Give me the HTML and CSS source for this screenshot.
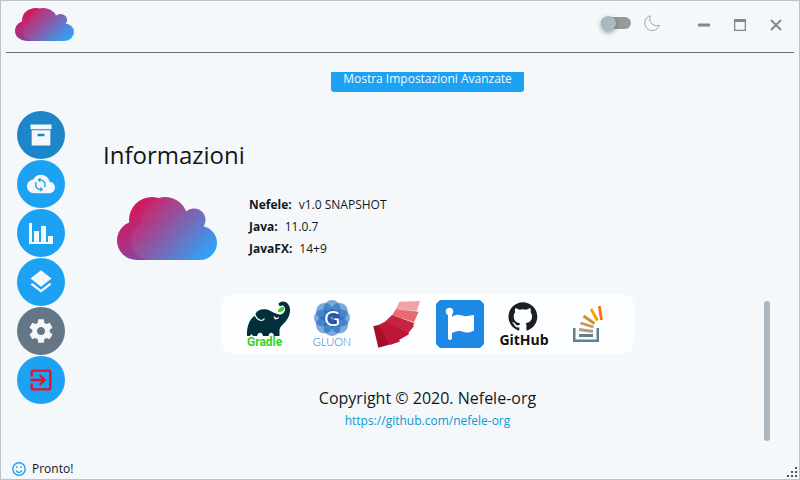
FILE: index.html
```html
<!DOCTYPE html>
<html lang="it">
<head>
<meta charset="utf-8">
<meta name="viewport" content="width=device-width, initial-scale=1">
<title>Nefele</title>
<link rel="stylesheet" href="styles.css">
</head>
<body>
<svg class="defs" aria-hidden="true">
  <defs>
    <linearGradient id="cloud-fill" gradientUnits="userSpaceOnUse" x1="22" y1="6" x2="84" y2="66">
      <stop offset="0" stop-color="#d81b60"/><stop offset="1" stop-color="#2ea3f8"/>
    </linearGradient>
    <linearGradient id="cloud-back" gradientUnits="userSpaceOnUse" x1="12" y1="20" x2="50" y2="62">
      <stop offset="0" stop-color="#cf1b63"/><stop offset="1" stop-color="#5f5fc0"/>
    </linearGradient>
    <symbol id="cloud" viewBox="0 0 100 63" preserveAspectRatio="none">
      <g fill="url(#cloud-back)">
        <circle cx="19.500" cy="43.500" r="19.500"/><circle cx="35" cy="23" r="23"/><path d="M19.500 30H60V63H19.500Z"/>
      </g>
      <g fill="url(#cloud-fill)">
        <circle cx="33.500" cy="43.500" r="19.500"/><circle cx="48" cy="23" r="23"/><circle cx="77" cy="23" r="11.500"/><circle cx="83" cy="46" r="17"/><path d="M33.500 26L66 22L83 30V63H33.500Z"/>
      </g>
    </symbol>
  </defs>
</svg>
<div class="window">
  <header class="titlebar">
    <svg class="brand" role="img" aria-label="Nefele"><use href="#cloud"/></svg>
    <label class="theme">
      <input class="switch" type="checkbox" aria-label="Tema scuro">
      <svg class="moon" viewBox="0 0 16 16" aria-hidden="true"><path d="M6.300.8A7.500 7.500 0 1 0 15.300 10.500A7.200 7.200 0 0 1 6.300.8Z"/></svg>
    </label>
    <div class="controls">
      <button aria-label="Riduci"><svg viewBox="0 0 12 12"><path d="M0 4.500h12v3H0z"/></svg></button>
      <button aria-label="Ingrandisci"><svg viewBox="0 0 12 12"><path fill-rule="evenodd" d="M0 0h12v12H0zM1.300 3v7.700h9.400V3z"/></svg></button>
      <button aria-label="Chiudi"><svg viewBox="0 0 12 12"><path class="cross" d="M1 1l10 10M11 1L1 11"/></svg></button>
    </div>
  </header>
  <div class="body">
    <nav class="sidebar" aria-label="Menu">
      <button class="nav selected" aria-label="Archivio"><svg viewBox="0 0 24 24"><path d="M3 3h18v4H3zM4 8h16v13H4zM9.500 11a.5.5 0 0 0-.5.5V13h6v-1.500a.5.5 0 0 0-.5-.5z" fill-rule="evenodd"/></svg></button>
      <button class="nav" aria-label="Sincronizza"><svg viewBox="0 0 24 24"><path d="M19.350 10.040C18.670 6.590 15.640 4 12 4 9.110 4 6.600 5.640 5.350 8.040 2.340 8.360 0 10.910 0 14c0 3.310 2.690 6 6 6h13c2.760 0 5-2.240 5-5 0-2.640-2.050-4.780-4.650-4.960z"/><path class="cut" transform="translate(4.500 5.600) scale(.58)" d="M12 4V1L8 5l4 4V6c3.310 0 6 2.690 6 6 0 1.010-.25 1.970-.7 2.800l1.460 1.460C19.540 15.030 20 13.570 20 12c0-4.420-3.580-8-8-8zm0 14c-3.310 0-6-2.690-6-6 0-1.010.25-1.970.7-2.800L5.240 7.740C4.460 8.970 4 10.430 4 12c0 4.420 3.580 8 8 8v3l4-4-4-4v3z"/></svg></button>
      <button class="nav" aria-label="Statistiche"><svg viewBox="0 0 28 28"><path d="M2 4h3v19h21v2H2zM7 12h5v12H7zM14 7h5v17h-5zM21 17h5v7h-5z"/></svg></button>
      <button class="nav" aria-label="Livelli"><svg viewBox="0 0 24 24"><path d="M11.990 18.540l-7.370-5.730L3 14.070l9 7 9-7-1.630-1.270-7.380 5.740zM12 16l7.360-5.730L21 9l-9-7-9 7 1.630 1.270L12 16z"/></svg></button>
      <button class="nav settings" aria-label="Impostazioni" aria-current="page"><svg viewBox="0 0 24 24"><path d="M19.430 12.980c.04-.32.07-.64.07-.98s-.03-.66-.07-.98l2.110-1.650c.19-.15.24-.42.12-.64l-2-3.460c-.12-.22-.39-.3-.61-.22l-2.490 1c-.52-.4-1.080-.73-1.690-.98l-.38-2.650C14.460 2.180 14.250 2 14 2h-4c-.25 0-.46.18-.49.42l-.38 2.650c-.61.25-1.170.59-1.690.98l-2.490-1c-.23-.09-.49 0-.61.22l-2 3.460c-.13.22-.07.49.12.64l2.110 1.650c-.04.32-.07.65-.07.98s.03.66.07.98l-2.110 1.650c-.19.15-.24.42-.12.64l2 3.460c.12.22.39.3.61.22l2.490-1c.52.4 1.080.73 1.690.98l.38 2.650c.03.24.24.42.49.42h4c.25 0 .46-.18.49-.42l.38-2.650c.61-.25 1.170-.59 1.690-.98l2.490 1c.23.09.49 0 .61-.22l2-3.460c.12-.22.07-.49-.12-.64l-2.110-1.650zM12 15.500c-1.930 0-3.500-1.570-3.500-3.500s1.570-3.500 3.500-3.500 3.500 1.570 3.500 3.500-1.570 3.500-3.500 3.500z"/></svg></button>
      <button class="nav exit" aria-label="Esci"><svg viewBox="0 0 24 24"><path d="M10.090 15.590L11.500 17l5-5-5-5-1.410 1.410L12.670 11H3v2h9.670l-2.580 2.590zM19 3H5c-1.110 0-2 .9-2 2v4h2V5h14v14H5v-4H3v4c0 1.100.89 2 2 2h14c1.100 0 2-.9 2-2V5c0-1.100-.9-2-2-2z"/></svg></button>
    </nav>
    <main class="content">
      <button class="advanced">Mostra Impostazioni Avanzate</button>
      <h1>Informazioni</h1>
      <section class="about">
        <svg class="cloud" role="img" aria-label="Nefele"><use href="#cloud"/></svg>
        <dl>
          <div><dt>Nefele:</dt><dd>v1.0 SNAPSHOT</dd></div>
          <div><dt>Java:</dt><dd>11.0.7</dd></div>
          <div><dt>JavaFX:</dt><dd>14+9</dd></div>
        </dl>
      </section>
      <div class="credits">
        <a href="#gradle" aria-label="Gradle"><svg viewBox="0 0 48 48">
          <path fill="#02303a" d="M3 36C2.500 28 5 19 11 15.500C12 10 18 8.500 23 9.500C27 10.500 29 13 32 13.500C36 16 41 14 41 9C41 5.500 38 4.500 36 6.500L34.300 4C36 1 41 .5 44 4C48 9 45.500 17 42 21C39 25 36 26 35.500 30V36H30C29.500 31.500 25 31.500 24.500 36H19C18.500 31.500 14 31.500 13 36H9C8.500 34 6.500 34 6 36Z"/>
          <path fill="none" stroke="#fff" stroke-width="1.200" d="M11 14.500C12 18 15 20 17 20.500C18 20.500 20 19.500 20.500 18.500M30 16.500C31 19 34 19.500 34.500 17"/>
          <circle cx="31.500" cy="18.500" r="1" fill="#fff"/>
          <path fill="#32d32c" d="M34 12C34 8 37 6.500 40 7C41 10 38 12.500 34 12Z"/>
          <text class="gradle-name" x="3" y="46">Gradle</text>
        </svg></a>
        <a href="#gluon" aria-label="Gluon"><svg viewBox="0 0 48 48">
          <g fill="#1668bd" fill-opacity=".56">
            <circle cx="24" cy="8.500" r="8.500"/><circle cx="31.500" cy="11.500" r="8.500"/><circle cx="33.500" cy="18" r="8.500"/><circle cx="31.500" cy="25" r="8.500"/><circle cx="24" cy="27.500" r="8.500"/><circle cx="16.500" cy="25" r="8.500"/><circle cx="14.500" cy="18" r="8.500"/><circle cx="16.500" cy="11.500" r="8.500"/>
          </g>
          <circle cx="24" cy="18" r="8" fill="#1b3f97" fill-opacity=".6"/>
          <text class="gluon-mark" x="24" y="26">G</text>
          <text class="gluon-name" x="24" y="46">GLUON</text>
        </svg></a>
        <a href="#scenic" aria-label="Ventaglio"><svg viewBox="0 0 48 48">
          <path fill="#f1a3a5" d="M27.300 1.700L48 1L44.700 11L24 9Z"/>
          <path fill="#e86b70" d="M24 9L46.700 11.700L42 22.300L20.300 15Z"/>
          <path fill="#bc1737" d="M20.300 15L13 21.700L5 25.700L18 45L28 41.500L27 40L37 34.300L36 32.500Z"/>
          <path fill="#c42341" d="M20.300 15L42.700 23.300L41 25L42 26L36 33.500L13.500 21.500Z"/>
          <path fill="#a40f2b" d="M1.300 26.300L6 25L18 44.500L6.300 47.700Z"/>
        </svg></a>
        <a href="#flag" aria-label="Bandiera"><svg viewBox="0 0 48 48">
          <path fill="#1e88e5" d="M4 0H44L48 4V44L44 48H4L0 44V4Z"/>
          <circle cx="13.500" cy="11.500" r="3.700" fill="#fff"/>
          <path fill="#fff" d="M12 12H16V16.500C22 13.500 24 15 29 16.200C32 16.500 35 15 38 15V30.500C35 32 32 33.500 28 32C23 30 20 31 16 33V38.500Q14 41.500 12 38.500Z"/>
        </svg></a>
        <a href="#github" aria-label="GitHub"><svg viewBox="0 0 48 48">
          <path fill="#1b1f23" transform="translate(8.500 2) scale(1.200)" d="M12 .297c-6.630 0-12 5.373-12 12 0 5.303 3.438 9.800 8.205 11.385.6.113.82-.258.82-.577 0-.285-.01-1.040-.015-2.040-3.338.724-4.042-1.610-4.042-1.610C4.422 18.070 3.633 17.700 3.633 17.700c-1.087-.744.084-.729.084-.729 1.205.084 1.838 1.236 1.838 1.236 1.070 1.835 2.809 1.305 3.495.998.108-.776.417-1.305.76-1.605-2.665-.3-5.466-1.332-5.466-5.930 0-1.310.465-2.380 1.235-3.220-.135-.303-.54-1.523.105-3.176 0 0 1.005-.322 3.300 1.230.96-.267 1.980-.399 3-.405 1.020.006 2.040.138 3 .405 2.280-1.552 3.285-1.230 3.285-1.230.645 1.653.24 2.873.12 3.176.765.84 1.230 1.910 1.230 3.220 0 4.610-2.805 5.625-5.475 5.920.42.36.81 1.096.81 2.220 0 1.606-.015 2.896-.015 3.286 0 .315.21.69.825.57C20.565 22.092 24 17.592 24 12.297c0-6.627-5.373-12-12-12"/>
          <text class="github-name" x="24" y="45">GitHub</text>
        </svg></a>
        <a href="#stackoverflow" aria-label="Stack Overflow"><svg viewBox="0 0 48 48">
          <path fill="#5f8091" d="M9 28h2.500v11.500h21V28H35v14H9zM15 34h14v3H15z"/>
          <g fill="none" stroke-width="2.800">
            <path stroke="#b99a78" d="M15 29.500L29 31.500"/><path stroke="#c3985a" d="M16.500 23L29.500 27"/><path stroke="#d08e2d" d="M19.500 16L30.500 23.500"/><path stroke="#fc9a08" d="M27 9L33.500 20.500"/><path stroke="#f4740e" d="M35.300 6L37.500 20"/>
          </g>
        </svg></a>
      </div>
      <p class="copyright">Copyright © 2020. Nefele-org</p>
      <a class="site" href="https://github.com/nefele-org">https://github.com/nefele-org</a>
    </main>
    <div class="scrollbar" aria-hidden="true"><div class="thumb"></div></div>
  </div>
  <footer class="status">
    <svg viewBox="0 0 14 14" aria-hidden="true"><circle cx="7" cy="7" r="6.200"/><path d="M4 8.500C5 11 9 11 10 8.500"/><path class="eyes" d="M4 4.500h1.600v1.600H4zM8.400 4.500H10v1.600H8.400z"/></svg>
    <span>Pronto!</span>
  </footer>
  <svg class="grip" viewBox="0 0 10 10" aria-hidden="true"><path d="M8 0h2v2H8zM4 4h2v2H4zM8 4h2v2H8zM0 8h2v2H0zM4 8h2v2H4zM8 8h2v2H8z"/></svg>
</div>
</body>
</html>
```
FILE: styles.css
```css
* { box-sizing: border-box; }
body { margin: 0; background: #f4f8fb; color: #14171a; font: 12px/22px "Open Sans", "Noto Sans", sans-serif; }
button { border: 0; padding: 0; background: none; font: inherit; cursor: pointer; }
svg { display: block; }
h1, p, dl, dd { margin: 0; }

.defs { position: absolute; width: 0; height: 0; }
.window { position: relative; display: flex; flex-direction: column; min-height: 100vh; border: 1px solid #c0c2c8; background: #f4f8fb; }

.titlebar { display: flex; align-items: flex-start; margin: 0 5px; padding: 7px 12px 0 9px; height: 52px; border-bottom: 1px solid #746e70; }
.brand { width: 59px; height: 33px; }
.theme { display: flex; align-items: center; gap: 13px; margin-left: auto; padding-top: 7px; }
.switch { appearance: none; position: relative; width: 30px; height: 12px; margin: 0; border-radius: 6px; background: #999; }
.switch::before { content: ""; position: absolute; left: 0; top: -1px; width: 15px; height: 15px; border-radius: 50%; background: #aab8c2; box-shadow: 0 2px 5px rgba(0, 0, 0, .35); }
.moon { width: 16px; height: 16px; fill: none; stroke: #a0a3a7; stroke-width: 1; }
.controls { display: flex; gap: 24px; margin-left: 38px; padding-top: 11px; }
.controls svg { width: 12px; height: 12px; fill: #85898d; }
.controls .cross { stroke: #85898d; stroke-width: 2; }

.body { display: flex; flex: 1; padding: 19px 29px 18px 16px; }
.sidebar { display: flex; flex-direction: column; gap: 1px; padding-top: 39px; }
.nav { display: flex; align-items: center; justify-content: center; width: 48px; height: 48px; border-radius: 50%; background: #1da1f2; }
.nav svg { width: 28px; height: 28px; fill: #f5f8fa; }
.nav .cut { fill: #1da1f2; }
.selected { background: #1c86c9; }
.settings { background: #657786; }
.exit svg { fill: #e8102d; }

.content { display: flex; flex: 1; flex-direction: column; align-items: center; margin: 0 12px 0 38px; overflow: hidden; }
.advanced { margin-top: -7px; padding: 3px 12px 2px; border-radius: 3px; background: #1da1f2; color: #f5f8fa; }
h1 { align-self: flex-start; margin-top: 45px; font-size: 24px; line-height: 36px; font-weight: 400; }
.about { display: flex; align-self: flex-start; align-items: flex-end; gap: 32px; margin-top: 21px; padding-left: 14px; }
.cloud { width: 100px; height: 63px; }
.about dl div { display: flex; gap: 7px; }
.about dt { font-weight: 700; }
.credits { display: flex; gap: 16px; margin-top: 34px; padding: 6px 22px; border-radius: 12px; background: #fdfeff; }
.credits svg { width: 48px; height: 48px; overflow: visible; }
.gradle-name { font: 700 12px Roboto, sans-serif; fill: #32d32c; }
.gluon-mark { font: 400 22px Lato, sans-serif; fill: #fff; text-anchor: middle; }
.gluon-name { font: 300 11px Lato, sans-serif; fill: #2b78c4; text-anchor: middle; }
.github-name { font: 700 14px "Open Sans", sans-serif; fill: #101214; text-anchor: middle; }
.copyright { margin-top: 32px; font-size: 16px; line-height: 24px; }
.site { color: #0d96cf; line-height: 22px; text-decoration: none; }

.scrollbar { display: flex; flex-direction: column; width: 6px; }
.thumb { height: 38%; margin-top: auto; border-radius: 3px; background: #aab8c2; }

.status { display: flex; align-items: center; gap: 6px; padding-left: 11px; line-height: 20px; }
.status svg { width: 14px; height: 14px; fill: none; stroke: #1da1f2; stroke-width: 1.400; }
.status .eyes { fill: #1da1f2; stroke: none; }
.grip { position: absolute; right: 2px; bottom: 2px; width: 10px; height: 10px; fill: #4b5057; }
```
